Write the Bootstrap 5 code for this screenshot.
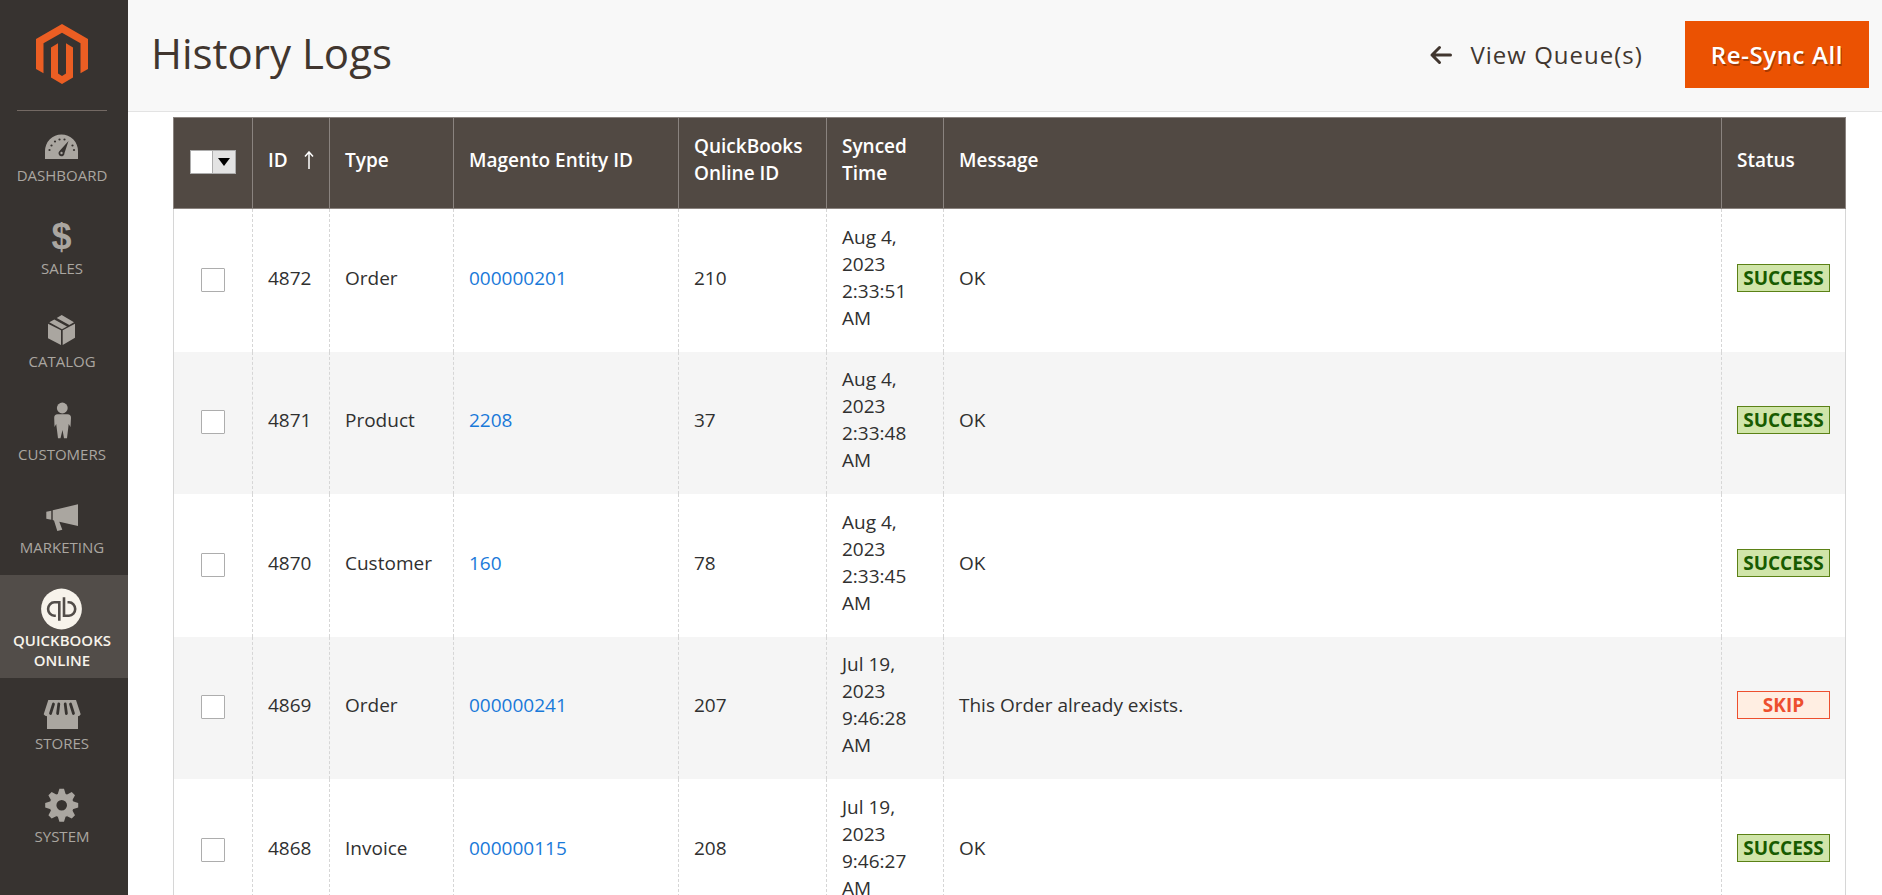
<!DOCTYPE html>
<html lang="en">
<head>
<meta charset="utf-8">
<meta name="viewport" content="width=device-width, initial-scale=1">
<title>History Logs</title>
<link href="https://cdn.jsdelivr.net/npm/bootstrap@5.3.0/dist/css/bootstrap.min.css" rel="stylesheet">
<style>
  body { font-family: "Open Sans", "Noto Sans", sans-serif; font-size: 19px; line-height: 27px; color: #303030; background: #fff; }
  .side-menu { width: 128px; background: #373330; padding-right: 4px; }
  .brand-mark { height: 111px; padding-top: 24px; margin: 0 17px -1px; border-bottom: 1px solid #736963; }
  .side-link { min-height: 93px; padding: 12px 4px 8px 0; margin-right: -4px; color: #aaa6a0; font-size: 15px; line-height: 20px; text-align: center; text-decoration: none; text-transform: uppercase; }
  .side-link svg { display: block; width: 44px; height: 43px; margin: 0 auto; fill: currentColor; }
  .side-link.active { background: #524d49; color: #f7f3eb; font-weight: 600; }
  .page-head { height: 112px; background: #f8f8f8; border-bottom: 1px solid #e3e3e3; padding: 0 13px 2px 23px; }
  .page-head h1 { font-size: 42px; line-height: 54px; font-weight: 400; color: #41362f; padding-bottom: 4px; }
  .head-btn { font-size: 24px; line-height: 33px; border: 0; border-radius: 0; padding: 17px 26px; }
  .btn-queue { color: #41362f; font-weight: 500; letter-spacing: 1px; }
  .btn-sync { background: #eb5202; color: #fff; font-weight: 600; letter-spacing: .025em; text-shadow: 1px 2px 0 rgba(0,0,0,.3); }
  .grid-wrap { padding: 5px 36px 0 45px; }
  .log-grid { width: 100%; table-layout: fixed; border-collapse: collapse; }
  .log-grid th { background: #514943; color: #fff; font-weight: 600; border: 1px solid #8a837f; padding: 15px 15px 21px; height: 91px; vertical-align: middle; }
  .log-grid td { border: 0 dashed #d6d6d6; border-width: 0 1px; padding: 14px 15px 20px; vertical-align: middle; }
  .log-grid tr:nth-child(odd) td { padding-top: 15px; }
  .log-grid td:first-child { border-left-style: solid; }
  .log-grid td:last-child { border-right-style: solid; }
  .log-grid tbody tr:nth-child(even) { background: #f5f5f5; }
  .log-grid a { color: #1979d9; text-decoration: none; }
  .row-check { display: block; appearance: none; width: 24px; height: 24px; margin: 4px auto 0; border: 1px solid #adadad; border-radius: 1px; background: #fff; }
  .pick-all { width: 46px; height: 24px; margin: 4px auto 0; border: 1px solid #adadad; background: #e3e3e3; }
  .pick-all input { appearance: none; width: 22px; height: 22px; margin: 0; background: #fff; border-right: 1px solid #adadad; }
  .pick-all button { border: 0; padding: 0; background: #e3e3e3; }
  .state { display: block; border: 1px solid; font-weight: 700; line-height: 26px; text-align: center; }
  .state-ok { background: #d0e5a9; border-color: #5b8116; color: #185b00; }
  .state-skip { background: #ffeee2; border-color: #ed4f2e; color: #ed4f2e; }
</style>
</head>
<body class="overflow-hidden">
<div class="d-flex min-vh-100">
  <nav class="side-menu flex-shrink-0" aria-label="Main menu">
    <div class="brand-mark text-center">
      <svg class="d-block mx-auto" width="52" height="60" viewBox="0 0 52 60" fill="#eb5e23" role="img" aria-label="Magento"><path d="M26 0 0 15v30l7.500 4.300V19.300L26 8.700l18.500 10.600v30L52 45V15z"/><path d="M22 19.300 15 23.500V53.500L26 60l11-6.500V23.500l-7-4.200v30.200L26 52l-4-2.500z"/></svg>
    </div>
    <a href="#" class="side-link d-block"><svg viewBox="0 0 44 43"><path fill-rule="evenodd" d="M5 37V29a16.500 16.500 0 0 1 33 0v8z"/><g fill="#373330"><circle cx="9.500" cy="28" r="1.100"/><circle cx="11.500" cy="23.500" r="1.100"/><circle cx="15" cy="19.500" r="1.100"/><circle cx="19.500" cy="17.500" r="1.100"/><circle cx="24.500" cy="17.500" r="1.100"/><circle cx="32.500" cy="23.500" r="1.100"/><circle cx="34" cy="28" r="1.100"/><path d="M28.500 19 24.500 31a3 3 0 1 1-5-2z"/></g><circle cx="21.500" cy="31" r="1.200"/></svg>Dashboard</a>
    <a href="#" class="side-link d-block"><svg viewBox="0 0 44 43"><text x="21.500" y="34" text-anchor="middle" font-family="Liberation Sans, sans-serif" font-weight="700" font-size="36">$</text></svg>Sales</a>
    <a href="#" class="side-link d-block"><svg viewBox="0 0 44 43"><path d="M8 15.700 21 22.300V37L8 30.300zM22.700 22.300 35 15.700v14L22.700 37zM16.700 10l5-3L34 14.300 29.300 17zM14.300 11.500 27 18.500l-5 2.700L9.300 14.300z"/></svg>Catalog</a>
    <a href="#" class="side-link d-block"><svg viewBox="0 0 44 43"><circle cx="22.300" cy="7" r="5.400"/><path d="M17.500 13.300h10q3.500 0 3.500 3.500L30.500 26l-1.800-3L27 37.300h-3L22.500 29l-2 8.300h-2.500L16.200 23l-1.700 3-.3-9.200q0-3.500 3.300-3.500z"/></svg>Customers</a>
    <a href="#" class="side-link d-block"><svg viewBox="0 0 44 43"><path d="M6.300 17.700 11.300 16.700v9l-5-1zM12.700 16.300 38 10.300V32l-18.700-4.300 3 8-5 1.300-3.300-10.500-1.300-.5z"/></svg>Marketing</a>
    <a href="#" class="side-link d-block active" aria-current="page"><svg viewBox="0 0 44 43"><circle cx="21.500" cy="22" r="20.400"/><path fill="none" stroke="#524d49" stroke-width="2.600" d="M19.300 33.700V15.300h-5a6.200 6.700 0 0 0 0 13.400h1.500M24 10.300v18.400h5a6.200 6.700 0 0 0 0-13.400h-1.500"/></svg>QuickBooks Online</a>
    <a href="#" class="side-link d-block"><svg viewBox="0 0 44 43"><path d="M8.300 10H36l4.700 14.300q-1 2-2.700 2V39H7V26.300q-2 0-3.300-2z"/><g stroke="#373330" stroke-width="2.800" stroke-linecap="round"><path d="M13.500 14 10.500 23.500M18.800 14l-1.200 9.500M25.200 14l1.200 9.500M30.500 14l3 9.500"/></g></svg>Stores</a>
    <a href="#" class="side-link d-block"><svg viewBox="0 0 44 43"><g transform="translate(21.700 22.300)"><path fill-rule="evenodd" d="M0-12A12 12 0 1 0 0 12 12 12 0 1 0 0-12zM0-5.300A5.300 5.300 0 1 1 0 5.300 5.300 5.300 0 1 1 0-5.300z"/><path id="tooth" d="M-4-11-2.300-16.500h4.600L4-11zM-4 11l1.700 5.500h4.600L4 11z"/><use href="#tooth" transform="rotate(45)"/><use href="#tooth" transform="rotate(90)"/><use href="#tooth" transform="rotate(135)"/></g></svg>System</a>
  </nav>
  <main class="flex-grow-1">
    <header class="page-head d-flex align-items-center justify-content-between">
      <h1 class="mb-0">History Logs</h1>
      <div class="d-flex align-items-center gap-3">
        <button type="button" class="btn head-btn btn-queue d-flex align-items-center"><svg class="me-3" width="26" height="20" viewBox="0 0 26 20" fill="none" stroke="#41362f" stroke-width="3" stroke-linecap="round" stroke-linejoin="round"><path d="M10.500 2.500 3 10l7.500 7.500M3 10h18.500"/></svg>View Queue(s)</button>
        <button type="button" class="btn head-btn btn-sync">Re-Sync All</button>
      </div>
    </header>
    <div class="grid-wrap">
      <table class="log-grid">
        <colgroup><col style="width:79px"><col style="width:77px"><col style="width:124px"><col style="width:225px"><col style="width:148px"><col style="width:117px"><col><col style="width:124px"></colgroup>
        <thead>
          <tr>
            <th scope="col"><div class="pick-all d-flex"><input type="checkbox" aria-label="Select all"><button type="button" class="flex-grow-1 d-flex align-items-center justify-content-center" aria-label="Selection options"><svg width="12" height="8" viewBox="0 0 12 8"><path d="M0 0h12L6 8z"/></svg></button></div></th>
            <th scope="col"><div class="d-flex align-items-center justify-content-between">ID <svg width="10" height="18" viewBox="0 0 10 18" fill="none" stroke="#fff" stroke-width="1.500"><path d="M5 18V1M1 5.500 5 1l4 4.500"/></svg></div></th>
            <th scope="col">Type</th><th scope="col">Magento Entity ID</th><th scope="col">QuickBooks Online ID</th><th scope="col">Synced Time</th><th scope="col">Message</th><th scope="col">Status</th>
          </tr>
        </thead>
        <tbody>
          <tr><td><input type="checkbox" class="row-check" aria-label="Select 4872"></td><td>4872</td><td>Order</td><td><a href="#">000000201</a></td><td>210</td><td>Aug 4, 2023 2:33:51 AM</td><td>OK</td><td><span class="state state-ok">SUCCESS</span></td></tr>
          <tr><td><input type="checkbox" class="row-check" aria-label="Select 4871"></td><td>4871</td><td>Product</td><td><a href="#">2208</a></td><td>37</td><td>Aug 4, 2023 2:33:48 AM</td><td>OK</td><td><span class="state state-ok">SUCCESS</span></td></tr>
          <tr><td><input type="checkbox" class="row-check" aria-label="Select 4870"></td><td>4870</td><td>Customer</td><td><a href="#">160</a></td><td>78</td><td>Aug 4, 2023 2:33:45 AM</td><td>OK</td><td><span class="state state-ok">SUCCESS</span></td></tr>
          <tr><td><input type="checkbox" class="row-check" aria-label="Select 4869"></td><td>4869</td><td>Order</td><td><a href="#">000000241</a></td><td>207</td><td>Jul 19, 2023 9:46:28 AM</td><td>This Order already exists.</td><td><span class="state state-skip">SKIP</span></td></tr>
          <tr><td><input type="checkbox" class="row-check" aria-label="Select 4868"></td><td>4868</td><td>Invoice</td><td><a href="#">000000115</a></td><td>208</td><td>Jul 19, 2023 9:46:27 AM</td><td>OK</td><td><span class="state state-ok">SUCCESS</span></td></tr>
        </tbody>
      </table>
    </div>
  </main>
</div>
<script src="https://cdn.jsdelivr.net/npm/bootstrap@5.3.0/dist/js/bootstrap.bundle.min.js"></script>
</body>
</html>
